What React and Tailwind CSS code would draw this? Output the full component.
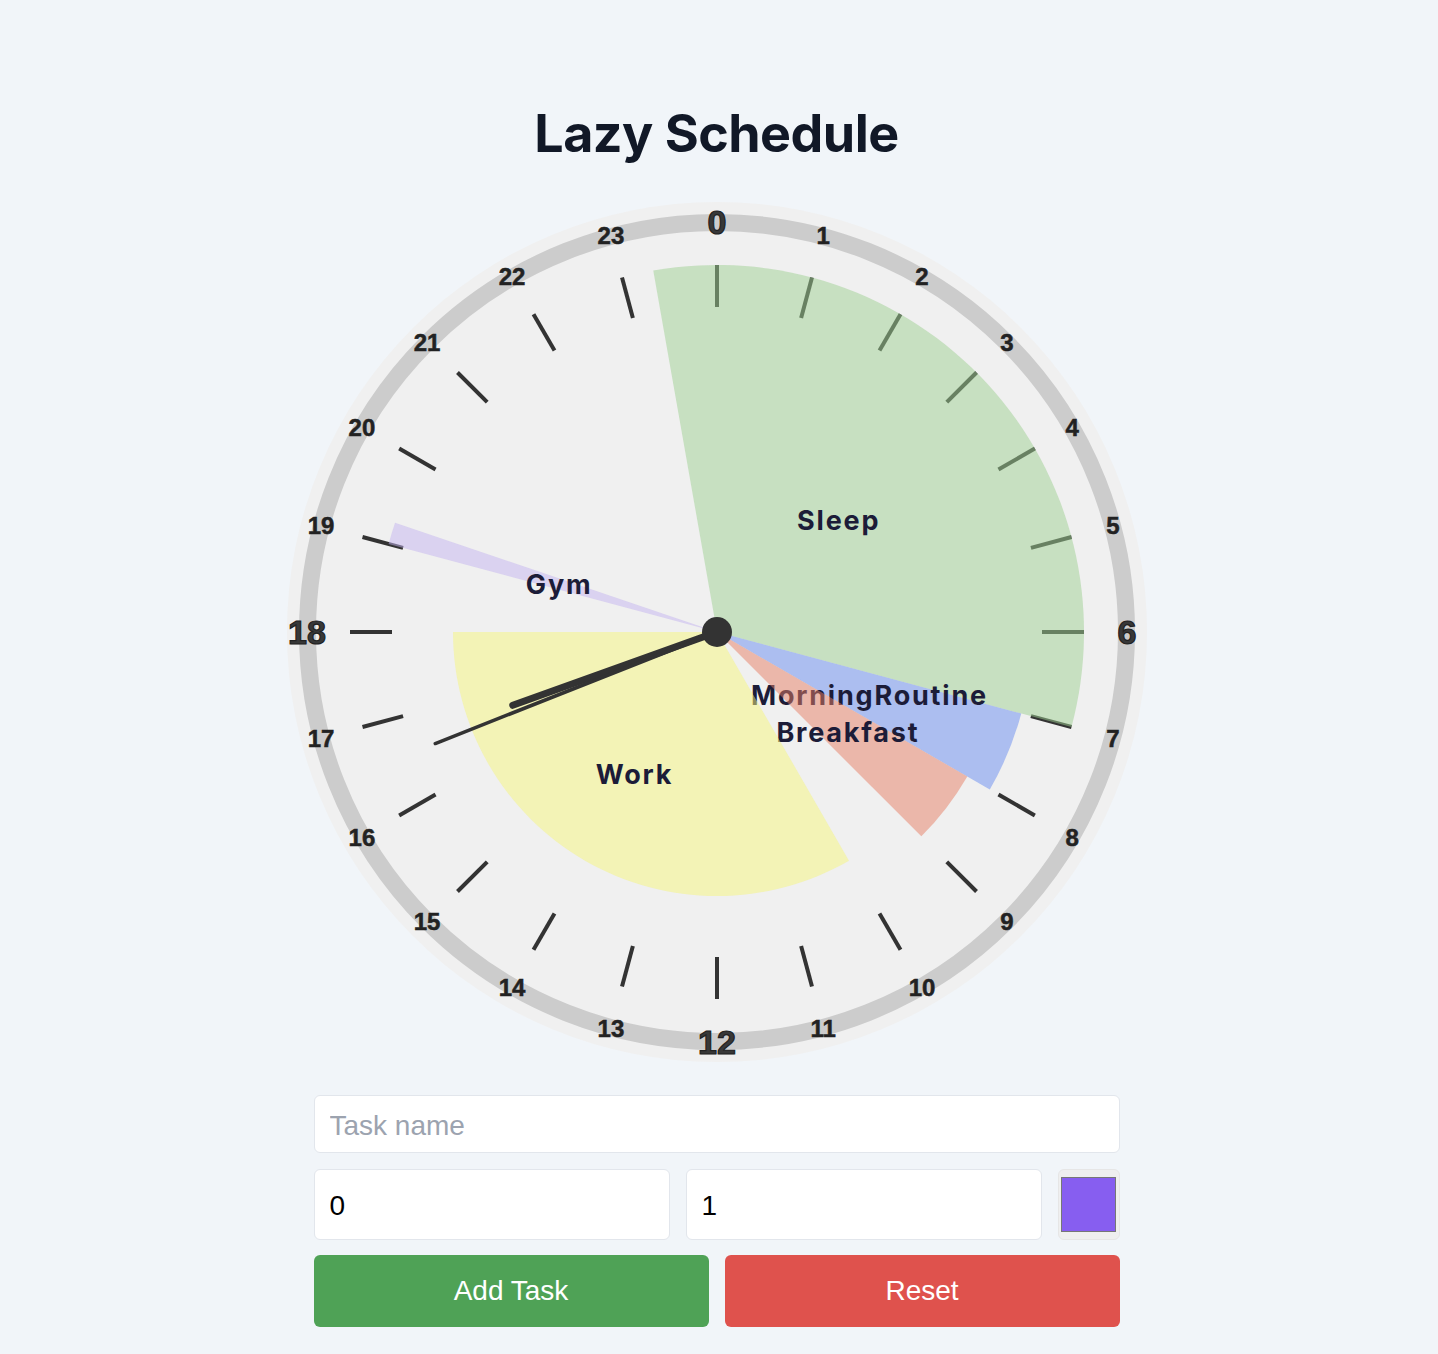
import React from "react";

const CX = 0;
const CY = 0;

function pt(h, r) {
  const a = (h * 15 * Math.PI) / 180;
  return [CX + r * Math.sin(a), CY - r * Math.cos(a)];
}

function wedge(h1, h2, r) {
  let span = h2 - h1;
  if (span < 0) span += 24;
  const [x1, y1] = pt(h1, r);
  const [x2, y2] = pt(h1 + span, r);
  const large = span * 15 > 180 ? 1 : 0;
  return `M ${CX} ${CY} L ${x1} ${y1} A ${r} ${r} 0 ${large} 1 ${x2} ${y2} Z`;
}

const tasks = [
  { name: "Sleep", start: 23 + 1 / 3, end: 7, r: 367, color: "#9ed092" },
  { name: "MorningRoutine", start: 7, end: 8, r: 315, color: "#688cf0" },
  { name: "Breakfast", start: 8, end: 9, r: 289, color: "#e67e64" },
  { name: "Work", start: 10, end: 18, r: 264, color: "#f6f67c" },
  { name: "Gym", start: 19, end: 19.25, r: 340, color: "#c4b4f0" },
];

function Clock() {
  const ticks = [];
  const labels = [];
  for (let h = 0; h < 24; h++) {
    const [x1, y1] = pt(h, 325);
    const [x2, y2] = pt(h, 367);
    ticks.push(
      <line key={"t" + h} x1={x1} y1={y1} x2={x2} y2={y2} stroke="#333" strokeWidth="4" />
    );
    const major = h % 6 === 0;
    const [lx, ly] = pt(h, 410);
    labels.push(
      <text
        key={"l" + h}
        x={lx}
        y={ly}
        textAnchor="middle"
        dominantBaseline="central"
        fontFamily="'Liberation Sans', Arial, sans-serif"
        fontWeight="700"
        fontSize={major ? 34 : 24}
        fill={major ? "#383838" : "#222"}
        stroke="#222"
        strokeWidth={major ? 1.2 : 0.5}
      >
        {h}
      </text>
    );
  }

  const hourAngle = 16 + 41 / 60;
  const [hx, hy] = pt(hourAngle, 217);
  const minuteH = (41.4 / 60) * 24;
  const [mx, my] = pt(minuteH, 303);

  return (
    <svg width="860" height="860" viewBox="-430 -430 860 860" className="block">
      <circle cx="0" cy="0" r="430" fill="#f0f0f0" />
      <circle cx="0" cy="0" r="409.5" fill="none" stroke="#cccccc" strokeWidth="17" />
      {ticks}
      {labels}
      {tasks.map((t) => {
        let span = t.end - t.start;
        if (span < 0) span += 24;
        const mid = t.start + span / 2;
        const [tx, ty] = pt(mid, 165);
        return (
          <g key={t.name}>
            <path d={wedge(t.start, t.end, t.r)} fill={t.color} fillOpacity="0.5" />
            <text
              x={tx}
              y={ty}
              textAnchor="middle"
              dominantBaseline="central"
              fontFamily="Inter, 'Liberation Sans', sans-serif"
              fontWeight="700"
              fontSize="27"
              letterSpacing="1.8"
              fill="#1c1c38"
            >
              {t.name}
            </text>
          </g>
        );
      })}
      <line x1="0" y1="0" x2={hx} y2={hy} stroke="#333" strokeWidth="7" strokeLinecap="round" />
      <line x1="0" y1="0" x2={mx} y2={my} stroke="#333" strokeWidth="3.5" strokeLinecap="round" />
      <circle cx="0" cy="0" r="15" fill="#333" />
    </svg>
  );
}

export default function App() {
  return (
    <div className="min-h-screen bg-[#f1f5f9] flex flex-col items-center pt-[108px] pb-[27px] pr-[5px]">
      <h1 className="text-[52px] leading-none font-bold text-[#111827] font-['Inter',sans-serif] tracking-[-0.01em]">
        Lazy Schedule
      </h1>
      <div className="mt-[42px]">
        <Clock />
      </div>
      <div className="mt-[33px] w-[806px] flex flex-col font-['Liberation_Sans',Arial,sans-serif]">
        <input
          type="text"
          placeholder="Task name"
          className="h-[58px] w-full rounded-md border border-[#e2e6ec] bg-white px-[15px] pt-[3px] text-[28px] text-black outline-none placeholder:text-[#9ca3af]"
        />
        <div className="mt-4 flex gap-4">
          <input
            type="number"
            defaultValue="0"
            className="h-[71px] w-[356px] rounded-md border border-[#e2e6ec] bg-white px-[15px] pt-[2px] text-[28px] text-black outline-none"
          />
          <input
            type="number"
            defaultValue="1"
            className="h-[71px] w-[356px] rounded-md border border-[#e2e6ec] bg-white px-[15px] pt-[2px] text-[28px] text-black outline-none"
          />
          <div className="h-[71px] w-[62px] rounded-md border border-[#e6e6e6] bg-[#efefef] flex items-center justify-center">
            <div className="w-[55px] h-[55px] bg-[#875ef0] border border-[#777]" />
          </div>
        </div>
        <div className="mt-[15px] flex gap-4">
          <button className="h-[72px] flex-1 rounded-md bg-[#4fa256] text-white text-[28px]">
            Add Task
          </button>
          <button className="h-[72px] flex-1 rounded-md bg-[#df524d] text-white text-[28px]">
            Reset
          </button>
        </div>
      </div>
    </div>
  );
}
